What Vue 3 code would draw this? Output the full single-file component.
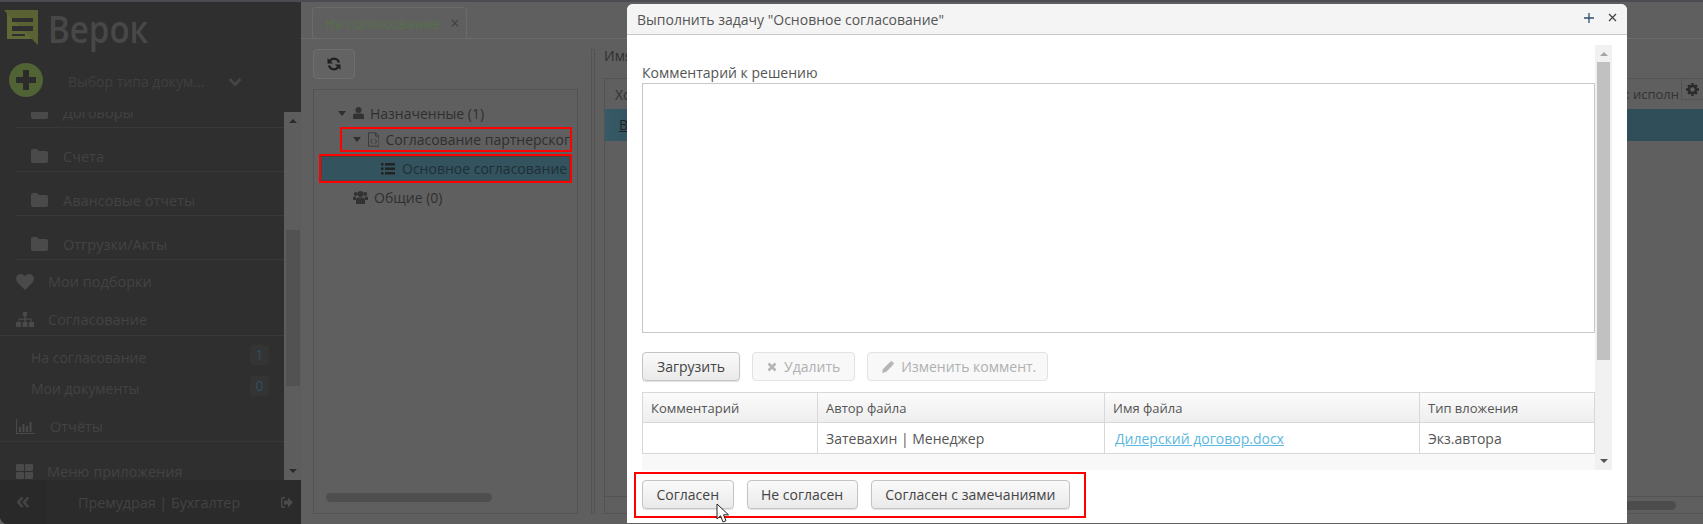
<template>
  <div class="page">
    <aside class="sidebar">
      <div class="side-head">
        <div class="logo-row">
          <svg class="logo-mark" width="34" height="35" viewBox="0 0 34 35">
            <path d="M0 0H34V35L28 29H3V3.500Z" fill="#5a6233" />
            <path d="M3 3.500L28 29H3Z" fill="#606a36" />
            <rect x="8" y="8" width="21" height="4" fill="#2f2f2f" />
            <rect x="8" y="16" width="21" height="5" fill="#2f2f2f" />
            <rect x="8" y="24" width="13" height="2" fill="#2f2f2f" />
          </svg>
          <span class="logo-text">Верок</span>
        </div>
        <div class="create-row">
          <span class="plus-btn">
            <svg width="22" height="22" viewBox="0 0 22 22">
              <path d="M8 1H14V8H21V14H14V21H8V14H1V8H8Z" fill="#2b2b2b" />
            </svg>
          </span>
          <span class="doc-type">Выбор типа докум...</span>
          <svg class="chevron" width="14" height="10" viewBox="0 0 14 10">
            <path d="M1.500 2L7 7.500L12.500 2" fill="none" stroke="#454545" stroke-width="3" />
          </svg>
        </div>
      </div>

      <div class="side-body">
        <nav class="menu">
          <div v-for="folder in folders" :key="folder" class="folder-row">
            <svg width="17" height="14" viewBox="0 0 17 14">
              <path d="M2 0H6L8 2H15Q17 2 17 4V12Q17 14 15 14H2Q0 14 0 12V2Q0 0 2 0Z" fill="#4a4a4a" />
            </svg>
            <span>{{ folder }}</span>
          </div>

          <div class="top-row favs">
            <svg width="18" height="16" viewBox="0 0 18 16">
              <path d="M9 16L1.500 8.500C-1.500 5 0.500 0 5 0C7 0 8 1 9 2.200C10 1 11 0 13 0C17.500 0 19.500 5 16.500 8.500Z" fill="#4a4a4a" />
            </svg>
            <span>Мои подборки</span>
          </div>
          <div class="top-row approval">
            <svg width="18" height="15" viewBox="0 0 18 15">
              <path d="M7 0H11V4H9.700V6.500H15.500V10H18V15H13V10H14.500V7.700H9.700V10H11.500V15H6.500V10H8.300V7.700H3.500V10H5V15H0V10H2.500V6.500H8.300V4H7Z" fill="#4a4a4a" />
            </svg>
            <span>Согласование</span>
          </div>
          <div class="sub-list">
            <div v-for="item in approvalItems" :key="item.name" class="sub-row">
              <span>{{ item.name }}</span>
              <span class="badge">{{ item.count }}</span>
            </div>
          </div>
          <div class="top-row reports">
            <svg width="19" height="15" viewBox="0 0 19 15">
              <path d="M0 0H1V14H19V15H0Z M3 8H5V13H3Z M6.500 5H8.500V13H6.500Z M10 7H12V13H10Z M13.500 3H15.500V13H13.500Z" fill="#4a4a4a" />
            </svg>
            <span>Отчёты</span>
          </div>
          <div class="top-row apps">
            <svg width="17" height="15" viewBox="0 0 17 15">
              <rect width="8" height="7" rx="1" fill="#4a4a4a" />
              <rect x="9" width="8" height="7" rx="1" fill="#4a4a4a" />
              <rect y="8" width="8" height="7" rx="1" fill="#4a4a4a" />
              <rect x="9" y="8" width="8" height="7" rx="1" fill="#4a4a4a" />
            </svg>
            <span>Меню приложения</span>
          </div>
        </nav>
        <div class="side-scroll">
          <span class="arrow-up dark"></span>
          <span class="side-thumb"></span>
          <span class="arrow-down dark"></span>
        </div>
      </div>

      <div class="side-foot">
        <span class="collapse">«</span>
        <span class="user">Премудрая | Бухгалтер</span>
        <svg class="logout" width="12" height="11" viewBox="0 0 12 11">
          <path d="M4 0H1.500Q0 0 0 1.500V9.500Q0 11 1.500 11H4V9.500H1.500V1.500H4Z M3 3.500H7V0.500L12 5.500L7 10.500V7.500H3Z" fill="#4a4a4a" />
        </svg>
      </div>
    </aside>

    <main class="main">
      <div class="tabs">
        <div class="tab">
          <span>На согласование</span>
          <span class="tab-close">×</span>
        </div>
      </div>
      <div class="workspace">
        <div class="tree-col">
          <button class="refresh">
            <svg width="14" height="14" viewBox="0 0 14 14">
              <path d="M12 5.500A5.200 5.200 0 0 0 2.800 3.800" fill="none" stroke="#1f1f1f" stroke-width="2.200" />
              <path d="M2 8.500A5.200 5.200 0 0 0 11.200 10.200" fill="none" stroke="#1f1f1f" stroke-width="2.200" />
              <path d="M0.500 1V6.500H6Z M13.500 13V7.500H8Z" fill="#1f1f1f" />
            </svg>
          </button>
          <div class="tree">
            <div class="node n0">
              <span class="caret"></span>
              <svg width="11" height="12" viewBox="0 0 11 12">
                <circle cx="5.500" cy="3" r="3" fill="#333" />
                <path d="M0 12V8.500Q0 6.500 2.500 6.500H8.500Q11 6.500 11 8.500V12Z" fill="#333" />
              </svg>
              <span class="node-name">Назначенные (1)</span>
            </div>
            <div class="node n1 marked">
              <span class="caret"></span>
              <svg width="12" height="15" viewBox="0 0 12 15">
                <path d="M.5.500H8L11.500 4V14.500H.5ZM8 .5V4H11.500" fill="none" stroke="#3a3a3a" />
                <path d="M4.500 7L3 9.500L4.500 12M7.500 7L9 9.500L7.500 12" fill="none" stroke="#3a3a3a" />
              </svg>
              <span class="node-name">Согласование партнерског</span>
            </div>
            <div class="node n2 selected">
              <svg width="14" height="12" viewBox="0 0 14 12">
                <path d="M0 0H2.500V2.500H0ZM4 0H14V2.500H4ZM0 4.500H2.500V7H0ZM4 4.500H14V7H4ZM0 9H2.500V11.500H0ZM4 9H14V11.500H4Z" fill="#222" />
              </svg>
              <span class="node-name">Основное согласование</span>
            </div>
            <div class="node n3">
              <svg width="15" height="13" viewBox="0 0 15 13">
                <circle cx="2.800" cy="3" r="2" fill="#333" />
                <circle cx="12.200" cy="3" r="2" fill="#333" />
                <circle cx="7.500" cy="3" r="3" fill="#333" />
                <path d="M0 9V6.500Q0 5.500 1.500 5.500H3V9ZM12 9V5.500H13.500Q15 5.500 15 6.500V9Z" fill="#333" />
                <path d="M3 13V8.500Q3 6.500 5 6.500H10Q12 6.500 12 8.500V13Z" fill="#333" />
              </svg>
              <span class="node-name">Общие (0)</span>
            </div>
            <div class="tree-scroll"></div>
          </div>
        </div>
        <div class="splitter"></div>
        <div class="grid-col">
          <div class="grid-caption">Имя</div>
          <div class="grid">
            <div class="grid-head">
              <span>Хо</span>
              <span class="grid-last">к исполн</span>
              <span class="gear">
                <svg width="13" height="13" viewBox="0 0 13 13">
                  <circle cx="6.500" cy="6.500" r="3.500" fill="none" stroke="#2a2a2a" stroke-width="2.400" />
                  <path d="M5.300 0H7.700V2.500H5.300ZM5.300 10.500H7.700V13H5.300ZM0 5.300H2.500V7.700H0ZM10.500 5.300H13V7.700H10.500ZM1.200 3L3 1.200L4.500 2.700L2.700 4.500ZM8.500 10.300L10.300 8.500L11.800 10L10 11.800ZM10 1.200L11.800 3L10.300 4.500L8.500 2.700ZM2.700 8.500L4.500 10.300L3 11.800L1.200 10Z" fill="#2a2a2a" />
                </svg>
              </span>
            </div>
            <div class="grid-row"><u>В</u></div>
            <div class="grid-spacer"></div>
            <div class="grid-foot"><span class="grid-thumb"></span></div>
          </div>
        </div>
      </div>
    </main>

    <section class="modal">
      <header class="modal-head">
        <span>Выполнить задачу "Основное согласование"</span>
        <svg class="head-plus" width="10" height="10" viewBox="0 0 10 10">
          <path d="M5 0V10M0 5H10" stroke="#2f4f6f" stroke-width="1.300" />
        </svg>
        <svg class="head-close" width="9" height="9" viewBox="0 0 9 9">
          <path d="M1 1L8 8M8 1L1 8" stroke="#444" stroke-width="1.300" />
        </svg>
      </header>
      <div class="modal-scroll">
        <div class="modal-body">
          <label class="comment-label">Комментарий к решению</label>
          <div class="comment-box"></div>
          <div class="file-actions">
            <button class="btn">Загрузить</button>
            <button class="btn off">
              <svg width="10" height="10" viewBox="0 0 10 10">
                <path d="M1.500 1.500L8.500 8.500M8.500 1.500L1.500 8.500" stroke="#b5b5b5" stroke-width="2.600" />
              </svg>
              Удалить
            </button>
            <button class="btn off edit">
              <svg width="12" height="12" viewBox="0 0 12 12">
                <path d="M0 12L1 8L8 1L11 4L4 11Z M8.800 .4Q9.500 -.2 10.200 .4L11.600 1.800Q12.200 2.500 11.600 3.200L11 3.800L8.200 1Z" fill="#b5b5b5" />
              </svg>
              Изменить коммент.
            </button>
          </div>
          <div class="files">
            <div class="files-head">
              <span v-for="col in fileCols" :key="col">{{ col }}</span>
            </div>
            <div class="files-row">
              <span></span>
              <span>Затевахин | Менеджер</span>
              <span><a class="file-link">Дилерский договор.docx</a></span>
              <span>Экз.автора</span>
            </div>
            <div class="files-rest"></div>
          </div>
        </div>
        <div class="modal-bar">
          <span class="arrow-up"></span>
          <span class="modal-thumb"></span>
          <span class="arrow-down"></span>
        </div>
      </div>
      <footer class="decision">
        <button v-for="d in decisions" :key="d" class="btn">{{ d }}</button>
      </footer>
      <svg class="pointer" width="14" height="20" viewBox="0 0 14 20">
        <path d="M1 1V16L4.500 12.800L7 19L10 17.700L7.500 11.800H12.500Z" fill="#fff" stroke="#222" />
      </svg>
    </section>
  </div>
</template>

<script setup>
const folders = ["Договоры", "Счета", "Авансовые отчеты", "Отгрузки/Акты"];
const approvalItems = [
  { name: "На согласование", count: 1 },
  { name: "Мои документы", count: 0 },
];
const fileCols = ["Комментарий", "Автор файла", "Имя файла", "Тип вложения"];
const decisions = ["Согласен", "Не согласен", "Согласен с замечаниями"];
</script>

<style>
html,
body {
  margin: 0;
  background: #5f5f5f;
}
</style>

<style scoped>
.page {
  position: relative;
  display: flex;
  width: 1703px;
  height: 524px;
  overflow: hidden;
  font-family: "Open Sans", "Noto Sans", sans-serif;
  font-size: 14px;
  color: #333;
  background: #5f5f5f;
  border-top: 2px solid #4b4b50;
  box-sizing: border-box;
}

/* sidebar */
.sidebar {
  display: flex;
  flex-direction: column;
  flex: 0 0 301px;
  background: #2f2f2f;
  color: #434343;
  border-bottom-left-radius: 8px;
}
.side-head {
  height: 110px;
  flex: none;
}
.logo-row {
  display: flex;
  align-items: center;
  gap: 10px;
  padding: 7px 0 0 4px;
  height: 37px;
}
.logo-text {
  font-size: 38px;
  font-weight: 600;
  line-height: 36px;
  color: #484848;
  transform: scaleX(0.87);
  transform-origin: left center;
}
.create-row {
  display: flex;
  align-items: center;
  padding: 17px 0 0 9px;
}
.plus-btn {
  display: flex;
  align-items: center;
  justify-content: center;
  width: 34px;
  height: 34px;
  border-radius: 50%;
  background: #4f6334;
}
.doc-type {
  margin: 3px 0 0 25px;
  color: #3f3f3f;
}
.chevron {
  margin: 3px 0 0 24px;
}
.side-body {
  display: flex;
  flex: 1;
  min-height: 0;
}
.menu {
  flex: 0 0 284px;
  overflow: hidden;
}
.folder-row {
  display: flex;
  align-items: center;
  gap: 15px;
  height: 44px;
  margin-left: 16px;
  padding: 13px 0 0 15px;
  box-sizing: border-box;
  border-bottom: 1px solid #383838;
  font-size: 14.500px;
}
.folder-row:first-child {
  margin-top: -28px;
}
.top-row {
  display: flex;
  align-items: center;
  gap: 14px;
  padding-left: 16px;
  font-size: 14.500px;
}
.favs {
  height: 43px;
  padding-bottom: 1px;
}
.approval {
  height: 31px;
  border-bottom: 1px solid #383838;
}
.sub-list {
  padding: 6px 15px 0 31px;
}
.sub-row {
  display: flex;
  justify-content: space-between;
  align-items: center;
  height: 31px;
}
.badge {
  width: 19px;
  height: 20px;
  line-height: 20px;
  margin-top: -5px;
  text-align: center;
  border-radius: 4px;
  background: #343434;
  color: #2d4f5e;
}
.reports {
  height: 30px;
  padding-top: 7px;
  border-bottom: 1px solid #383838;
  gap: 15px;
}
.apps {
  height: 58px;
}
.side-scroll {
  position: relative;
  flex: 1;
  background: #5d5d5d;
}
.side-thumb {
  position: absolute;
  left: 2px;
  right: 1px;
  top: 118px;
  height: 156px;
  background: #525252;
}
.arrow-up,
.arrow-down {
  position: absolute;
  left: 50%;
  margin-left: -4px;
  border-left: 4px solid transparent;
  border-right: 4px solid transparent;
}
.arrow-up {
  top: 7px;
  border-bottom: 4px solid #a5a5a5;
}
.arrow-down {
  bottom: 7px;
  border-top: 4px solid #555;
}
.arrow-up.dark {
  border-bottom-color: #2b2b2b;
}
.arrow-down.dark {
  border-top-color: #2b2b2b;
}
.side-foot {
  display: flex;
  align-items: center;
  flex: 0 0 44px;
  background: #2b2b2b;
  border-bottom-left-radius: 8px;
}
.collapse {
  width: 46px;
  align-self: stretch;
  text-align: center;
  font-size: 26px;
  font-weight: 600;
  line-height: 38px;
  color: #454545;
  background: #292929;
  border-bottom-left-radius: 8px;
}
.user {
  margin-left: 32px;
  font-size: 14.300px;
  color: #434343;
}
.logout {
  margin-left: 41px;
}

/* main behind the dialog */
.main {
  display: flex;
  flex-direction: column;
  flex: 1;
  min-width: 0;
}
.tabs {
  flex: 0 0 36px;
  padding: 5px 0 0 11px;
  box-sizing: border-box;
  border-bottom: 1px solid #6b6b6b;
}
.tab {
  display: flex;
  align-items: center;
  gap: 10px;
  width: 155px;
  height: 31px;
  padding-left: 12px;
  box-sizing: border-box;
  border: 1px solid #6b6b6b;
  border-bottom: none;
  border-radius: 4px 4px 0 0;
  color: #55704a;
}
.tab-close {
  font-size: 16px;
  color: #3f3f3f;
}
.workspace {
  display: flex;
  flex: 1;
  min-height: 0;
}
.tree-col {
  display: flex;
  flex-direction: column;
  flex: 0 0 265px;
  margin-left: 12px;
  padding: 10px 0 10px;
  box-sizing: border-box;
}
.refresh {
  display: flex;
  align-items: center;
  justify-content: center;
  width: 42px;
  height: 30px;
  padding: 0;
  border: 1px solid #6e6e6e;
  border-radius: 4px;
  background: #636363;
}
.tree {
  position: relative;
  flex: 1;
  margin-top: 10px;
  padding-top: 9px;
  border: 1px solid #535353;
}
.node {
  display: flex;
  align-items: center;
  gap: 6px;
  height: 28px;
  color: #2f2f2f;
  white-space: nowrap;
}
.n0 {
  padding-left: 24px;
}
.n1 {
  width: 232px;
  height: 25px;
  margin: 0 0 0 26px;
  padding-left: 11px;
  box-sizing: border-box;
  overflow: hidden;
}
.marked {
  border: 2px solid #f00;
}
.n2 {
  width: 253px;
  margin: 2px 0 0 5px;
  gap: 7px;
}
.selected {
  box-sizing: border-box;
  height: 29px;
  padding-left: 60px;
  border: 2px solid #f00;
  background: #33535f;
  box-shadow: inset 0 0 0 1px #444;
  color: #1f2f36;
}
.n3 {
  padding-left: 39px;
}
.caret {
  width: 0;
  height: 0;
  margin-right: 1px;
  border-left: 4px solid transparent;
  border-right: 4px solid transparent;
  border-top: 5px solid #2f2f2f;
}
.tree-scroll {
  position: absolute;
  left: 12px;
  bottom: 11px;
  width: 166px;
  height: 9px;
  border-radius: 5px;
  background: #4e4e4e;
}
.splitter {
  flex: 0 0 2px;
  margin: 10px 0 10px 13px;
  border: 1px solid #535353;
}
.grid-col {
  display: flex;
  flex-direction: column;
  flex: 1;
  min-width: 0;
  margin-left: 9px;
  padding-top: 7px;
  padding-bottom: 10px;
}
.grid-caption {
  height: 32px;
  color: #2f2f2f;
}
.grid {
  display: flex;
  flex-direction: column;
  flex: 1;
  border: 1px solid #535353;
  border-right: none;
}
.grid-head {
  display: flex;
  align-items: center;
  height: 30px;
  padding-left: 10px;
  color: #333;
}
.grid-last {
  margin-left: auto;
  margin-right: 2px;
  font-size: 13px;
}
.gear {
  align-self: flex-start;
  display: flex;
  align-items: center;
  justify-content: center;
  width: 21px;
  height: 20px;
  border: 1px solid #535353;
  border-width: 0 0 1px 1px;
}
.grid-row {
  height: 32px;
  line-height: 31px;
  padding-left: 14px;
  background: linear-gradient(90deg, #365a66, #2f4e5a 5%);
  color: #222;
}
.grid-spacer {
  flex: 1;
}
.grid-foot {
  display: flex;
  align-items: center;
  justify-content: flex-end;
  height: 16px;
  border-top: 1px solid #535353;
}
.grid-thumb {
  width: 470px;
  height: 9px;
  margin-right: 27px;
  border-radius: 5px;
  background: #4c4c4c;
}

/* dialog */
.modal {
  position: absolute;
  left: 627px;
  top: 2px;
  width: 1000px;
  height: 519px;
  background: #fff;
  border-radius: 6px 6px 0 0;
  color: #555;
}
.modal-head {
  position: relative;
  display: flex;
  align-items: center;
  height: 30px;
  padding-left: 10px;
  background: #f4f4f4;
  border-bottom: 1px solid #c8c8c8;
  border-radius: 6px 6px 0 0;
}
.head-plus {
  position: absolute;
  left: 957px;
  top: 9px;
}
.head-close {
  position: absolute;
  left: 981px;
  top: 9px;
}
.modal-scroll {
  display: flex;
  height: 425px;
  margin: 10px 15px 0 15px;
}
.modal-body {
  flex: 1;
  min-width: 0;
  overflow: hidden;
}
.comment-label {
  display: block;
  padding-top: 18px;
  height: 20px;
  line-height: 20px;
  font-size: 14px;
}
.comment-box {
  height: 248px;
  border: 1px solid #c8c8c8;
}
.file-actions {
  display: flex;
  gap: 12px;
  margin-top: 19px;
}
.btn {
  display: flex;
  align-items: center;
  justify-content: center;
  gap: 6px;
  height: 29px;
  padding: 0 14px;
  border: 1px solid #c4c4c4;
  border-radius: 4px;
  background: linear-gradient(#fafafa, #eaeaea);
  box-shadow: 0 1px 1px rgba(0, 0, 0, 0.12);
  font-family: inherit;
  font-size: 14px;
  color: #444;
}
.off {
  gap: 7px;
  padding: 0 14px;
  color: #b0b0b0;
  border-color: #e2e2e2;
  background: #f8f8f8;
  box-shadow: none;
}
.edit {
  padding: 0 11px 0 14px;
}
.files {
  margin-top: 11px;
  font-size: 13px;
}
.files-head,
.files-row {
  display: grid;
  grid-template-columns: 174px 287px 315px 1fr;
  height: 31px;
  box-sizing: border-box;
  border: 1px solid #d8d8d8;
}
.files-head {
  background: linear-gradient(#fbfbfb, #eeeeee);
}
.files-row {
  border-top: none;
  font-size: 14px;
}
.files-head span,
.files-row span {
  display: flex;
  align-items: center;
  padding-left: 8px;
  border-left: 1px solid #d8d8d8;
}
.files-head span:first-child,
.files-row span:first-child {
  border-left: none;
}
.file-link {
  margin-left: 2px;
  color: #5bb8e0;
  text-decoration: underline;
}
.files-rest {
  height: 16px;
  background: #f8f8f8;
}
.modal-bar {
  position: relative;
  flex: 0 0 17px;
  background: #f1f1f1;
}
.modal-thumb {
  position: absolute;
  left: 2px;
  right: 2px;
  top: 17px;
  height: 298px;
  background: #c1c1c1;
}
.decision {
  position: relative;
  display: flex;
  gap: 13px;
  width: 452px;
  height: 46px;
  margin: 2px 0 0 7px;
  padding: 6px 0 0 6px;
  box-sizing: border-box;
  border: 2px solid #f00;
}
.decision .btn {
  padding: 0 13.500px;
}
.pointer {
  position: absolute;
  left: 89px;
  top: 499px;
}
</style>
